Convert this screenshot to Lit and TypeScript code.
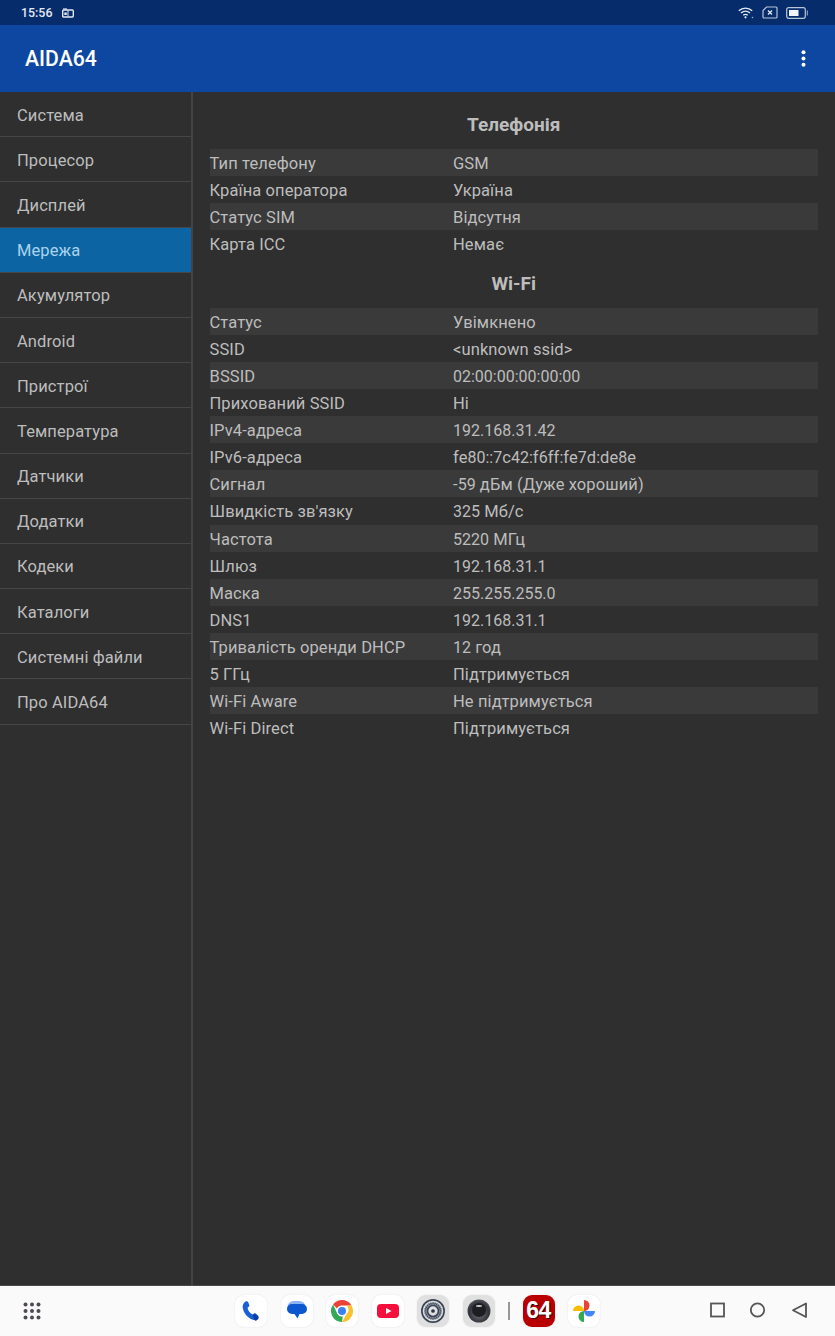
import { LitElement, html, css, svg } from "lit";
import { customElement } from "lit/decorators.js";

const MENU = ["Система","Процесор","Дисплей","Мережа","Акумулятор","Android","Пристрої","Температура","Датчики","Додатки","Кодеки","Каталоги","Системні файли","Про AIDA64"];
const PHONE: [string,string][] = [["Тип телефону","GSM"],["Країна оператора","Україна"],["Статус SIM","Відсутня"],["Карта ICC","Немає"]];
const WIFI: [string,string][] = [["Статус","Увімкнено"],["SSID","<unknown ssid>"],["BSSID","02:00:00:00:00:00"],["Прихований SSID","Ні"],["IPv4-адреса","192.168.31.42"],["IPv6-адреса","fe80::7c42:f6ff:fe7d:de8e"],["Сигнал","-59 дБм (Дуже хороший)"],["Швидкість зв'язку","325 Мб/с"],["Частота","5220 МГц"],["Шлюз","192.168.31.1"],["Маска","255.255.255.0"],["DNS1","192.168.31.1"],["Тривалість оренди DHCP","12 год"],["5 ГГц","Підтримується"],["Wi-Fi Aware","Не підтримується"],["Wi-Fi Direct","Підтримується"]];

const gridDots = [0,1,2].flatMap(r => [0,1,2].map(c => svg`<circle cx=${2.5+c*6.5} cy=${2.5+r*6.5} r="2"/>`));
const gearTicks = Array.from({length:24},(_,i)=>svg`<rect x="13.2" y="4.6" width="1.6" height="2.4" transform="rotate(${i*15} 14 14)"/>`);

const runs = (t: string) => t.split(/([\d.:]+)/).map((p, i) => i % 2 ? html`<span class="d">${p}</span>` : p);

@customElement("app-root")
export class AppRoot extends LitElement {
  static styles = css`
    :host { display:flex; flex-direction:column; width:835px; height:1336px; background:#2f2f2f; font-family:Roboto,"Noto Sans",sans-serif; color:#bdbdbd; overflow:hidden; }
    .status { height:25px; flex:none; background:#062c6b; color:#e4e9f2; display:flex; align-items:center; padding:0 26px 0 21px; font-size:12.4px; font-weight:500; }
    .status .time { width:41px; }
    .status .spacer { flex:1; }
    .status svg { display:block; }
    .status .right { display:flex; align-items:center; gap:8px; }
    .appbar { height:67px; flex:none; background:#0d47a1; color:#fff; display:flex; align-items:center; justify-content:space-between; padding:0 29px 0 25px; font-size:21.2px; font-weight:500; box-sizing:border-box; }
    .main { flex:1; display:flex; min-height:0; }
    nav { width:191px; flex:none; border-right:2px solid #444; }
    .item { height:45.2px; box-sizing:border-box; border-bottom:1px solid #464646; padding:2px 0 0 17px; display:flex; align-items:center; font-size:16.5px; letter-spacing:.1px; }
    .item.sel { background:#0c65a2; color:#a9d3ef; }
    .content { flex:1; padding:18px 17px 0 16.5px; min-width:0; }
    h2 { margin:0; height:30px; font-size:19px; line-height:30px; font-weight:700; text-align:center; color:#bdbdbd; }
    h2 + .tbl { margin-top:9px; }
    .tbl + h2 { margin-top:11px; }
    .row { height:27.13px; display:flex; align-items:center; padding-top:2px; box-sizing:border-box; font-size:16.5px; letter-spacing:.1px; white-space:nowrap; }
    .row:nth-child(odd) { background:#3a3a3a; }
    .d { font-size:16px; letter-spacing:0; }
    .k { width:243.5px; flex:none; }
    .dock { height:51px; flex:none; box-sizing:border-box; background:#fafafa; border-top:1.5px solid #4a4a4a; position:relative; display:flex; align-items:center; justify-content:center; padding-bottom:1px; }
    .grid { position:absolute; left:23px; top:16px; fill:#4f4a52; }
    .apps { display:flex; align-items:center; gap:13.5px; }
    .app { width:32px; height:32px; border-radius:9px; background:#fff; box-shadow:0 0 2px rgba(0,0,0,.1); display:flex; align-items:center; justify-content:center; }
    .app.grey { background:#e0e0e0; }
    .app.red { background:#b80000; color:#fff; font-family:"Liberation Sans",sans-serif; font-weight:700; font-size:23px; letter-spacing:-.5px; text-shadow:1px 1px 0 #300; }
    .sep { width:2px; height:18px; background:#9a979c; margin:0 -.5px; }
    .nav3 { position:absolute; right:26px; top:16px; stroke:#555; fill:none; }
  `;

  private table(rows: [string,string][]) {
    return html`<div class="tbl">${rows.map(([k,v]) => html`<div class="row"><div class="k">${k}</div><div>${runs(v)}</div></div>`)}</div>`;
  }

  render() {
    return html`
      <div class="status">
        <span class="time">15:56</span>
        <svg width="12" height="10" viewBox="0 0 12 10"><rect x=".7" y="2" width="10.600" height="7" rx="1" fill="none" stroke="#e4e9f2" stroke-width="1.400"/><path d="M1 1h4" stroke="#e4e9f2" stroke-width="1.200"/><path d="M6 2.500v6" stroke="#e4e9f2"/><rect x="2.300" y="4.500" width="2.500" height="2.500" fill="#e4e9f2"/></svg>
        <span class="spacer"></span>
        <div class="right">
          <svg width="16" height="12" viewBox="0 0 16 12" fill="none" stroke="#e4e9f2" stroke-width="1.300"><path d="M.8 3.800C4.600.2 10.400.2 14.200 3.800M3 6c2.700-2.300 6.300-2.300 9 0M5.200 8.200c1.500-1.100 3.100-1.100 4.600 0"/><circle cx="7.500" cy="10.300" r="1.100" fill="#e4e9f2" stroke="none"/><circle cx="14.500" cy="10.500" r=".8" fill="#9db0d0" stroke="none"/></svg>
          <svg width="16" height="13" viewBox="0 0 16 13" fill="none" stroke="#b9c4d8" stroke-width="1.200"><path d="M4.500 1H14a1 1 0 0 1 1 1v9a1 1 0 0 1-1 1H2a1 1 0 0 1-1-1V4.500z"/><path d="M6 4.500l4 4m0-4l-4 4" stroke="#e4e9f2" stroke-width="1.300"/></svg>
          <svg width="23" height="12" viewBox="0 0 23 12"><rect x=".7" y=".7" width="18.600" height="10.600" rx="2" fill="none" stroke="#b9c4d8" stroke-width="1.200"/><rect x="3" y="3" width="9.500" height="6" fill="#f2f4f8"/><rect x="20.700" y="3.500" width="1.300" height="5" fill="#7f93b8"/></svg>
        </div>
      </div>
      <div class="appbar">
        <span>AIDA64</span>
        <svg width="5" height="17" viewBox="0 0 5 17" fill="#fff"><circle cx="2.500" cy="2.300" r="2"/><circle cx="2.500" cy="8.500" r="2"/><circle cx="2.500" cy="14.700" r="2"/></svg>
      </div>
      <div class="main">
        <nav>${MENU.map(m => html`<div class="item ${m === "Мережа" ? "sel" : ""}">${m}</div>`)}</nav>
        <div class="content">
          <h2>Телефонія</h2>
          ${this.table(PHONE)}
          <h2>Wi-Fi</h2>
          ${this.table(WIFI)}
        </div>
      </div>
      <div class="dock">
        <svg class="grid" width="18" height="18" viewBox="0 0 18 18">${gridDots}</svg>
        <div class="apps">
          <div class="app"><svg width="20" height="22" viewBox="0 0 20 22"><path d="M4.500 1.500c1-.6 2.200-.2 2.700.8l1 2.400c.3.800.1 1.500-.5 2l-1.200 1c.6 3 2.400 5.400 5 6.700l1.500-.9c.7-.4 1.500-.3 2 .2l2 1.800c.8.800.8 1.900 0 2.700-1.300 1.500-3.200 2.200-5.200 1.500C6.300 18 2.500 13 1.700 7.500c-.3-2.500.9-4.800 2.800-6z" fill="#1a5fd6"/><path d="M11.500 15.400l1.500-.9c.7-.4 1.500-.3 2 .2l2 1.800c.8.800.8 1.900 0 2.700-1 1-2 1.500-3 1.600z" fill="#0b3fa8"/></svg></div>
          <div class="app"><svg width="22" height="22" viewBox="0 0 22 22"><rect x="1.500" y="1" width="18" height="12" rx="6" fill="#8ab4f8"/><path d="M6 4h10a5 5 0 0 1 0 10h-2.500l-2 4.500-3-4.500H6A5 5 0 0 1 6 4z" fill="#0b57d0"/></svg></div>
          <div class="app"><svg width="24" height="24" viewBox="0 0 24 24"><path d="M12 1a11 11 0 0 1 9.530 5.500H12a5.500 5.500 0 0 0-5 3L3.100 5.600A11 11 0 0 1 12 1z" fill="#ea4335"/><path d="M21.530 6.500A11 11 0 0 1 12 23l4.800-8.300a5.500 5.500 0 0 0 0-8.200z" fill="#fbc02d"/><path d="M12 23A11 11 0 0 1 3.100 5.600L7.300 14.700a5.500 5.500 0 0 0 5.500 2.800z" fill="#34a853"/><circle cx="12" cy="12" r="5.300" fill="#fff"/><circle cx="12" cy="12" r="4" fill="#3b82ee"/></svg></div>
          <div class="app"><svg width="24" height="16" viewBox="0 0 24 16"><rect x="1" y="1" width="22" height="14" rx="4" fill="#f50f3a"/><path d="M10 5l5.500 3-5.500 3z" fill="#fff"/></svg></div>
          <div class="app grey"><svg width="26" height="26" viewBox="0 0 28 28" fill="none"><circle cx="14" cy="14" r="12" stroke="#3a4658" stroke-width="1.800"/><g fill="#3a4658">${gearTicks}</g><circle cx="14" cy="14" r="6" stroke="#3a4658" stroke-width="2"/><circle cx="14" cy="14" r="2" fill="#2a3444"/></svg></div>
          <div class="app grey"><svg width="24" height="24" viewBox="0 0 24 24"><defs><radialGradient id="cam" cx=".5" cy=".6" r=".6"><stop offset="0" stop-color="#777a82"/><stop offset=".7" stop-color="#33343a"/><stop offset="1" stop-color="#50535c"/></radialGradient></defs><circle cx="12" cy="12" r="11.500" fill="url(#cam)"/><circle cx="12" cy="11" r="7" fill="#1d1d22"/><ellipse cx="12" cy="7" rx="3.200" ry="1" fill="#c8c8cc"/></svg></div>
          <div class="sep"></div>
          <div class="app red">64</div>
          <div class="app"><svg width="24" height="24" viewBox="0 0 24 24"><path d="M12 12V1a5.500 5.500 0 0 1 5.500 5.500A5.500 5.500 0 0 1 12 12z" fill="#ea4335"/><path d="M12 12h11a5.500 5.500 0 0 1-5.500 5.500A5.500 5.500 0 0 1 12 12z" fill="#4285f4"/><path d="M12 12v11a5.500 5.500 0 0 1-5.500-5.500A5.500 5.500 0 0 1 12 12z" fill="#34a853"/><path d="M12 12H1a5.500 5.500 0 0 1 5.500-5.500A5.500 5.500 0 0 1 12 12z" fill="#fbbc04"/></svg></div>
        </div>
        <svg class="nav3" width="110" height="18" viewBox="0 0 110 18" stroke-width="1.800"><rect x="12" y="1.500" width="13" height="13"/><circle cx="58.500" cy="8" r="6.700"/><path d="M107 1.500v13.500L94 8.250z" stroke-linejoin="round"/></svg>
      </div>
    `;
  }
}
